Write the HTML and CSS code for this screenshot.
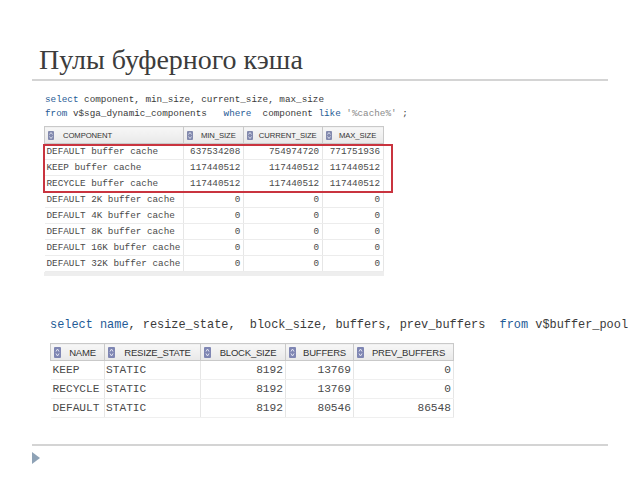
FILE: index.html
```html
<!DOCTYPE html>
<html>
<head>
  <meta charset="UTF-8">
  <title>Пулы буферного кэша</title>
  <link rel="stylesheet" href="styles.css">
</head>
<body>
  <div class="slide">
    <h1 class="title">Пулы буферного кэша</h1>

    <div class="shot shot-one">
      <pre class="sql sql-one"><span class="kw">select</span> component, min_size, current_size, max_size
<span class="kw">from</span> v$sga_dynamic_components   <span class="kw">where</span>  component <span class="kw">like</span> <span class="str">'%cache%'</span> ;</pre>

      <div class="grid-wrap">
        <table class="grid grid-one">
          <colgroup>
            <col style="width: 139px">
            <col style="width: 60px">
            <col style="width: 80px">
            <col style="width: 61px">
          </colgroup>
          <thead>
            <tr>
              <th class="first"><span class="sort"><svg viewBox="0 0 6 9"><rect width="6" height="9" rx="1" fill="#8289ad"/><path d="M1.5 3.5 L3 1.5 L4.5 3.5 M1.5 5.5 L3 7.5 L4.5 5.5" stroke="#dfe2ef" stroke-width="0.9" fill="none"/></svg></span><span class="label">COMPONENT</span></th>
              <th><span class="sort"><svg viewBox="0 0 6 9"><rect width="6" height="9" rx="1" fill="#8289ad"/><path d="M1.5 3.5 L3 1.5 L4.5 3.5 M1.5 5.5 L3 7.5 L4.5 5.5" stroke="#dfe2ef" stroke-width="0.9" fill="none"/></svg></span><span class="label">MIN_SIZE</span></th>
              <th><span class="sort"><svg viewBox="0 0 6 9"><rect width="6" height="9" rx="1" fill="#8289ad"/><path d="M1.5 3.5 L3 1.5 L4.5 3.5 M1.5 5.5 L3 7.5 L4.5 5.5" stroke="#dfe2ef" stroke-width="0.9" fill="none"/></svg></span><span class="label">CURRENT_SIZE</span></th>
              <th><span class="sort"><svg viewBox="0 0 6 9"><rect width="6" height="9" rx="1" fill="#8289ad"/><path d="M1.5 3.5 L3 1.5 L4.5 3.5 M1.5 5.5 L3 7.5 L4.5 5.5" stroke="#dfe2ef" stroke-width="0.9" fill="none"/></svg></span><span class="label">MAX_SIZE</span></th>
            </tr>
          </thead>
          <tbody>
            <tr><td>DEFAULT buffer cache</td><td class="num">637534208</td><td class="num">754974720</td><td class="num">771751936</td></tr>
            <tr><td>KEEP buffer cache</td><td class="num">117440512</td><td class="num">117440512</td><td class="num">117440512</td></tr>
            <tr><td>RECYCLE buffer cache</td><td class="num">117440512</td><td class="num">117440512</td><td class="num">117440512</td></tr>
            <tr><td>DEFAULT 2K buffer cache</td><td class="num">0</td><td class="num">0</td><td class="num">0</td></tr>
            <tr><td>DEFAULT 4K buffer cache</td><td class="num">0</td><td class="num">0</td><td class="num">0</td></tr>
            <tr><td>DEFAULT 8K buffer cache</td><td class="num">0</td><td class="num">0</td><td class="num">0</td></tr>
            <tr><td>DEFAULT 16K buffer cache</td><td class="num">0</td><td class="num">0</td><td class="num">0</td></tr>
            <tr><td>DEFAULT 32K buffer cache</td><td class="num">0</td><td class="num">0</td><td class="num">0</td></tr>
          </tbody>
        </table>
        <div class="highlight"></div>
      </div>
    </div>

    <div class="shot shot-two">
      <pre class="sql sql-two"><span class="kw">select</span> <span class="kw">name</span>, resize_state,  block_size, buffers, prev_buffers  <span class="kw">from</span> v$buffer_pool</pre>

      <table class="grid grid-two">
        <colgroup>
          <col style="width: 54px">
          <col style="width: 96px">
          <col style="width: 85px">
          <col style="width: 68px">
          <col style="width: 100px">
        </colgroup>
        <thead>
          <tr>
            <th><span class="sort"><svg viewBox="0 0 7 11"><rect width="7" height="11" rx="1" fill="#7f86b3"/><path d="M2 4.5 L3.5 2 L5 4.5 M2 6.5 L3.5 9 L5 6.5" stroke="#e3e5f2" stroke-width="1" fill="none"/></svg></span><span class="label">NAME</span></th>
            <th><span class="sort"><svg viewBox="0 0 7 11"><rect width="7" height="11" rx="1" fill="#7f86b3"/><path d="M2 4.5 L3.5 2 L5 4.5 M2 6.5 L3.5 9 L5 6.5" stroke="#e3e5f2" stroke-width="1" fill="none"/></svg></span><span class="label">RESIZE_STATE</span></th>
            <th><span class="sort"><svg viewBox="0 0 7 11"><rect width="7" height="11" rx="1" fill="#7f86b3"/><path d="M2 4.5 L3.5 2 L5 4.5 M2 6.5 L3.5 9 L5 6.5" stroke="#e3e5f2" stroke-width="1" fill="none"/></svg></span><span class="label">BLOCK_SIZE</span></th>
            <th><span class="sort"><svg viewBox="0 0 7 11"><rect width="7" height="11" rx="1" fill="#7f86b3"/><path d="M2 4.5 L3.5 2 L5 4.5 M2 6.5 L3.5 9 L5 6.5" stroke="#e3e5f2" stroke-width="1" fill="none"/></svg></span><span class="label">BUFFERS</span></th>
            <th><span class="sort"><svg viewBox="0 0 7 11"><rect width="7" height="11" rx="1" fill="#7f86b3"/><path d="M2 4.5 L3.5 2 L5 4.5 M2 6.5 L3.5 9 L5 6.5" stroke="#e3e5f2" stroke-width="1" fill="none"/></svg></span><span class="label">PREV_BUFFERS</span></th>
          </tr>
        </thead>
        <tbody>
          <tr><td>KEEP</td><td>STATIC</td><td class="num">8192</td><td class="num">13769</td><td class="num">0</td></tr>
          <tr><td>RECYCLE</td><td>STATIC</td><td class="num">8192</td><td class="num">13769</td><td class="num">0</td></tr>
          <tr><td>DEFAULT</td><td>STATIC</td><td class="num">8192</td><td class="num">80546</td><td class="num">86548</td></tr>
        </tbody>
      </table>
    </div>

    <div class="footer">
      <span class="bullet"></span>
    </div>
  </div>
</body>
</html>
```

FILE: styles.css
```css
body {
  margin: 0;
  background-color: white;
  font-family: "Liberation Sans", Arial, sans-serif;
  color: #333;
}

.slide {
  width: 640px;
  height: 480px;
  overflow: hidden;
}

.title {
  margin: 0 32px;
  padding: 44px 0 3px 7px;
  font-family: "Liberation Serif", "Times New Roman", serif;
  font-size: 28px;
  font-weight: normal;
  line-height: 32px;
  color: #3c3c3c;
  border-bottom: 2px solid #d4d4d4;
}

.sql {
  margin: 0;
  font-family: "Liberation Mono", "Courier New", monospace;
  color: #3a3a3a;
  white-space: pre;
}

.sql .kw {
  color: #1f5b96;
}

.sql .str {
  color: #8a8a8a;
}

.shot-one {
  margin: 12px 0 0 44px;
}

.sql-one {
  padding-left: 1px;
  font-size: 9.3px;
  line-height: 14px;
}

.grid-wrap {
  position: relative;
  width: 340px;
  margin-top: 5px;
  border-bottom: 4px solid #eeeeee;
}

.grid {
  border-collapse: collapse;
  table-layout: fixed;
}

.grid th {
  padding: 0;
  background: linear-gradient(#f7f7f7, #e8e8e8);
  border: 1px solid #c9c9c9;
  font-weight: normal;
  color: #333;
  text-align: center;
  white-space: nowrap;
}

.grid th .sort {
  float: left;
}

.grid th svg {
  display: block;
}

.grid td {
  padding: 0 3px;
  font-family: "Liberation Mono", "Courier New", monospace;
  color: #4a4a4a;
  white-space: nowrap;
  border-bottom: 1px solid #ececec;
  border-right: 1px solid #e6e6e6;
  overflow: hidden;
}

.grid td.num {
  text-align: right;
}

.grid-one th {
  height: 16px;
  font-size: 7.7px;
  letter-spacing: -0.1px;
}

.grid-one th .sort {
  margin: 0 0 0 3px;
}

.grid-one th .sort svg {
  width: 6px;
  height: 9px;
}

.grid-one th.first {
  text-align: left;
}

.grid-one th.first .label {
  padding-left: 9px;
}

.grid-one td {
  height: 15px;
  font-size: 9.3px;
  line-height: 15px;
}

.grid-one td:first-child {
  padding-left: 2px;
}

.highlight {
  position: absolute;
  left: -1px;
  top: 18px;
  width: 346px;
  height: 45px;
  border: 2px solid #c9343f;
}

.shot-two {
  margin: 41px 0 0 50px;
}

.sql-two {
  font-size: 11.9px;
  line-height: 16px;
}

.grid-two {
  margin-top: 10px;
}

.grid-two th {
  height: 16px;
  font-size: 9.5px;
  letter-spacing: -0.2px;
}

.grid-two th .sort {
  margin: 0 0 0 3px;
}

.grid-two th .sort svg {
  width: 7px;
  height: 11px;
}

.grid-two td {
  height: 18px;
  padding: 0 2px;
  font-size: 11.2px;
  line-height: 18px;
  border-bottom-color: #efefef;
}

.grid-two td:nth-child(2) {
  padding-left: 1px;
}

.footer {
  margin: 26px 32px 0;
  border-top: 2px solid #d4d4d4;
  padding-top: 6px;
}

.bullet {
  display: block;
  width: 0;
  height: 0;
  border-top: 6px solid transparent;
  border-bottom: 6px solid transparent;
  border-left: 8px solid #8ea2b6;
}
```
